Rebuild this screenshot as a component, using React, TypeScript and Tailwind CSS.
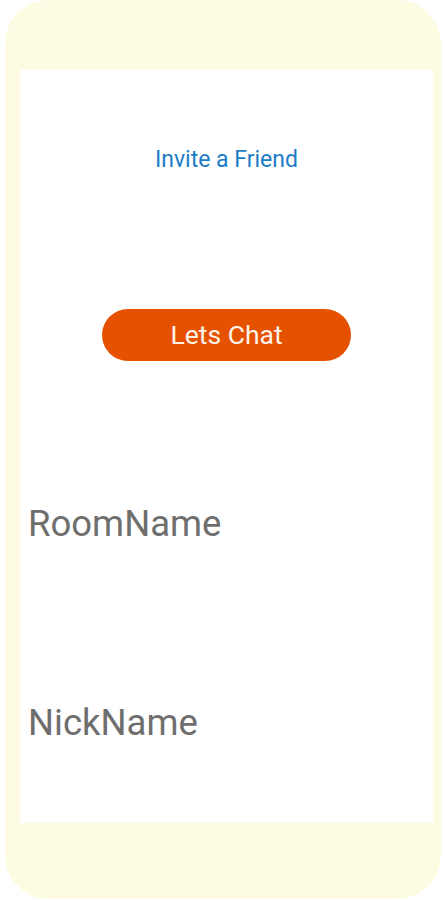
import React from 'react';

const App = () => {
    return (
        <div className="h-[900px] w-[445px] bg-white font-['Roboto',sans-serif]">
            <div className="ml-[5px] flex h-[899px] w-[436px] flex-col rounded-[44px] bg-[#fdfbe1] pt-[70px] pb-[76px] pl-[15px] pr-[8px]">
                <div className="flex flex-1 flex-col bg-white">
                    <div className="mt-[76px] text-center text-[23px] leading-[28px] text-[#1c7cc6]">
                        Invite a Friend
                    </div>
                    <div className="mt-[135px] flex justify-center">
                        <button className="h-[52px] w-[249px] rounded-full bg-[#e65100] text-[26.5px] text-[#fdf3ea]">
                            Lets Chat
                        </button>
                    </div>
                    <div className="mt-[142px] pl-[8px] text-[36.5px] leading-[42px] text-[#6e6e6e]">
                        RoomName
                    </div>
                    <div className="mt-[157px] pl-[8px] text-[36.5px] leading-[42px] text-[#6e6e6e]">
                        NickName
                    </div>
                </div>
            </div>
        </div>
    );
};

export default App;
